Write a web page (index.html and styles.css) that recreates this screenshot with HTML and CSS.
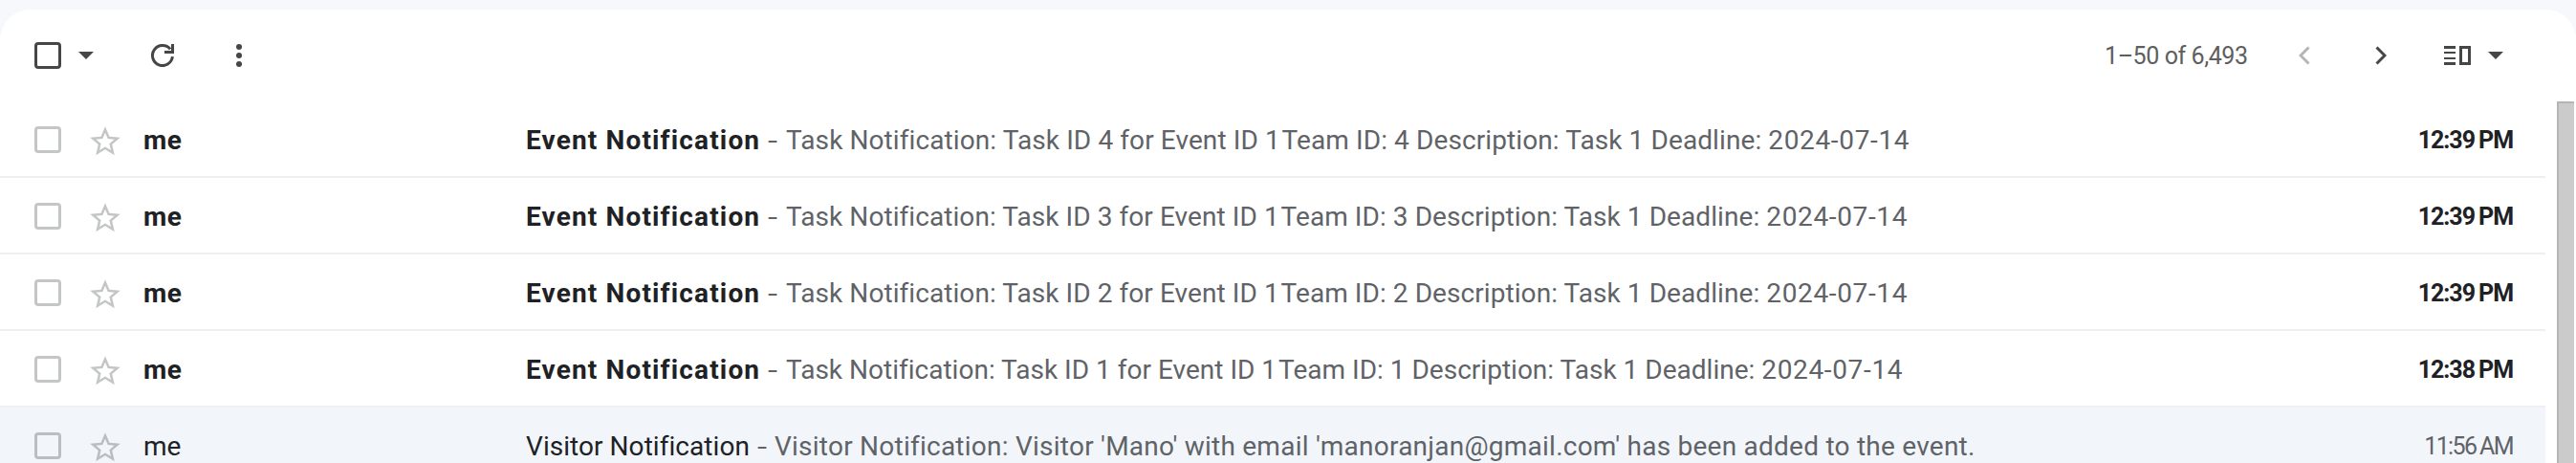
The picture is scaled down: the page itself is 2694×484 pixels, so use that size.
FILE: index.html
```html
<!DOCTYPE html>
<html lang="en">
<head>
<meta charset="utf-8">
<title>Inbox</title>
<link rel="stylesheet" href="styles.css">
</head>
<body>
<svg class="defs" aria-hidden="true">
  <symbol id="star" viewBox="0 0 24 24"><path d="M22 9.240l-7.190-.620L12 2 9.190 8.630 2 9.240l5.460 4.730L5.820 21 12 17.270 18.180 21l-1.630-7.030L22 9.240zM12 15.400l-3.760 2.270 1-4.280-3.320-2.880 4.380-.380L12 6.100l1.710 4.040 4.380.380-3.320 2.880 1 4.280L12 15.400z" fill="currentColor"/></symbol>
</svg>
<main class="panel">
  <header class="toolbar">
    <span class="checkbox dark"></span>
    <span class="caret"></span>
    <svg class="refresh" viewBox="0 0 24 24"><path d="M20.100 5.400A10.500 10.500 0 1 0 22.400 13.200" fill="none" stroke="currentColor" stroke-width="3"/><path d="M21 0h3v10H14V7h7z" fill="currentColor"/></svg>
    <svg class="more" viewBox="0 0 6 24"><circle cx="3" cy="3" r="3"/><circle cx="3" cy="12" r="3"/><circle cx="3" cy="21" r="3"/></svg>
    <span class="count">1–50 of 6,493</span>
    <svg class="prev" viewBox="0 0 12 20"><path d="M10.500 1.500L2 10l8.500 8.500"/></svg>
    <svg class="next" viewBox="0 0 12 20"><path d="M1.500 1.500L10 10l-8.500 8.500"/></svg>
    <svg class="split" viewBox="0 0 28 20"><path d="M0 0h12v3H0zM0 6h12v2H0zM0 12h12v2H0zM0 17h12v3H0zM16 0h12v20H16zM19 3v14h6V3z" fill="currentColor" fill-rule="evenodd"/></svg>
    <span class="caret end"></span>
  </header>
  <div class="content">
    <div class="list">
      <div class="row unread"><span class="checkbox"></span><svg class="star"><use href="#star"/></svg><span class="sender">me</span><span class="subject">Event Notification</span><span class="dash">-</span><span class="snippet">Task Notification: Task ID 4 for Event ID <span class="one">1 </span>Team ID: 4 Description: Task 1 Deadline: <span class="date">2024-07-14</span></span><span class="time">12:39 PM</span></div>
      <div class="row unread"><span class="checkbox"></span><svg class="star"><use href="#star"/></svg><span class="sender">me</span><span class="subject">Event Notification</span><span class="dash">-</span><span class="snippet mid">Task Notification: Task ID 3 for Event ID <span class="one">1 </span>Team ID: 3 Description: Task 1 Deadline: <span class="date">2024-07-14</span></span><span class="time">12:39 PM</span></div>
      <div class="row unread"><span class="checkbox"></span><svg class="star"><use href="#star"/></svg><span class="sender">me</span><span class="subject">Event Notification</span><span class="dash">-</span><span class="snippet mid">Task Notification: Task ID 2 for Event ID <span class="one">1 </span>Team ID: 2 Description: Task 1 Deadline: <span class="date">2024-07-14</span></span><span class="time">12:39 PM</span></div>
      <div class="row unread"><span class="checkbox"></span><svg class="star"><use href="#star"/></svg><span class="sender">me</span><span class="subject">Event Notification</span><span class="dash">-</span><span class="snippet narrow">Task Notification: Task ID 1 for Event ID <span class="one">1 </span>Team ID: 1 Description: Task 1 Deadline: <span class="date">2024-07-14</span></span><span class="time">12:38 PM</span></div>
      <div class="row read"><span class="checkbox"></span><svg class="star"><use href="#star"/></svg><span class="sender">me</span><span class="subject">Visitor Notification</span><span class="dash">-</span><span class="snippet">Visitor Notification: Visitor 'Mano' with email 'manoranjan@gmail.com' has been added to the event.</span><span class="time">11:56 AM</span></div>
    </div>
    <div class="scrollbar"></div>
  </div>
</main>
</body>
</html>
```
FILE: styles.css
```css
* { box-sizing: border-box; }
body { margin: 0; height: 484px; overflow: hidden; background: #f6f8fc; padding-top: 10px; font-family: Roboto, "Liberation Sans", sans-serif; color: #202124; }
.defs { display: none; }
.panel { height: 474px; background: #fff; border-radius: 32px 32px 0 0; overflow: hidden; }
.toolbar { display: flex; align-items: center; height: 96px; padding-left: 36px; color: #444746; }
.checkbox { width: 28px; height: 28px; border: 3px solid #c4c6c5; border-radius: 4px; flex: none; }
.checkbox.dark { border-color: #444746; }
.caret { width: 16px; height: 8px; margin-left: 18px; background: #444746; clip-path: polygon(0 0, 100% 0, 50% 100%); }
.refresh { width: 24px; height: 24px; margin-left: 60px; }
.more { width: 6px; height: 24px; margin-left: 65px; fill: #444746; }
.count { margin-left: auto; width: 149px; font-size: 25px; letter-spacing: -.42px; color: #5e5e5e; white-space: nowrap; }
.prev, .next { width: 12px; height: 20px; fill: none; stroke: #444746; stroke-width: 3; }
.prev { margin-left: 54px; stroke: #b4b5b5; }
.next { margin-left: 68px; }
.split { width: 28px; height: 20px; margin-left: 60px; }
.caret.end { margin-right: 76px; }
.content { display: flex; height: 378px; }
.list { width: 2662px; flex: none; }
.row { display: flex; align-items: center; height: 80px; border-bottom: 2px solid #eeefef; padding: 2px 34px 0 36px; font-size: 28px; white-space: nowrap; }
.row.read { background: #f2f6fb; }
.row.read .checkbox { border-color: #bbbec1; }
.row.read .star { color: #bbbec1; }
.star { width: 38px; height: 38px; margin: 4px 0 0 27px; color: #c4c6c5; flex: none; }
.sender { width: 400px; margin-left: 21px; flex: none; }
.unread .sender { letter-spacing: .4px; }
.subject { width: 253px; flex: none; }
.unread .subject { letter-spacing: 1.15px; }
.read .subject { width: 242px; letter-spacing: .05px; }
.dash { width: 19px; flex: none; color: #5f6368; transform: scaleX(1.3); transform-origin: left center; }
.read .dash { width: 18px; }
.snippet { color: #5f6368; letter-spacing: .095px; }
.snippet.mid { letter-spacing: .07px; }
.snippet.narrow { letter-spacing: .01px; }
.snippet .one { letter-spacing: -2.500px; }
.snippet .date { letter-spacing: .65px; }
.read .snippet { letter-spacing: .24px; }
.time { margin-left: auto; font-size: 25px; letter-spacing: -1.050px; word-spacing: -1px; }
.unread .sender, .unread .subject, .unread .time { font-weight: 700; }
.read .time { color: #5f6368; letter-spacing: -1.600px; word-spacing: -1px; }
.scrollbar { width: 18px; margin-left: 12px; background: #cbcbcb; border-left: 2px solid #b5b5b5; border-top: 2px solid #b5b5b5; }
```
